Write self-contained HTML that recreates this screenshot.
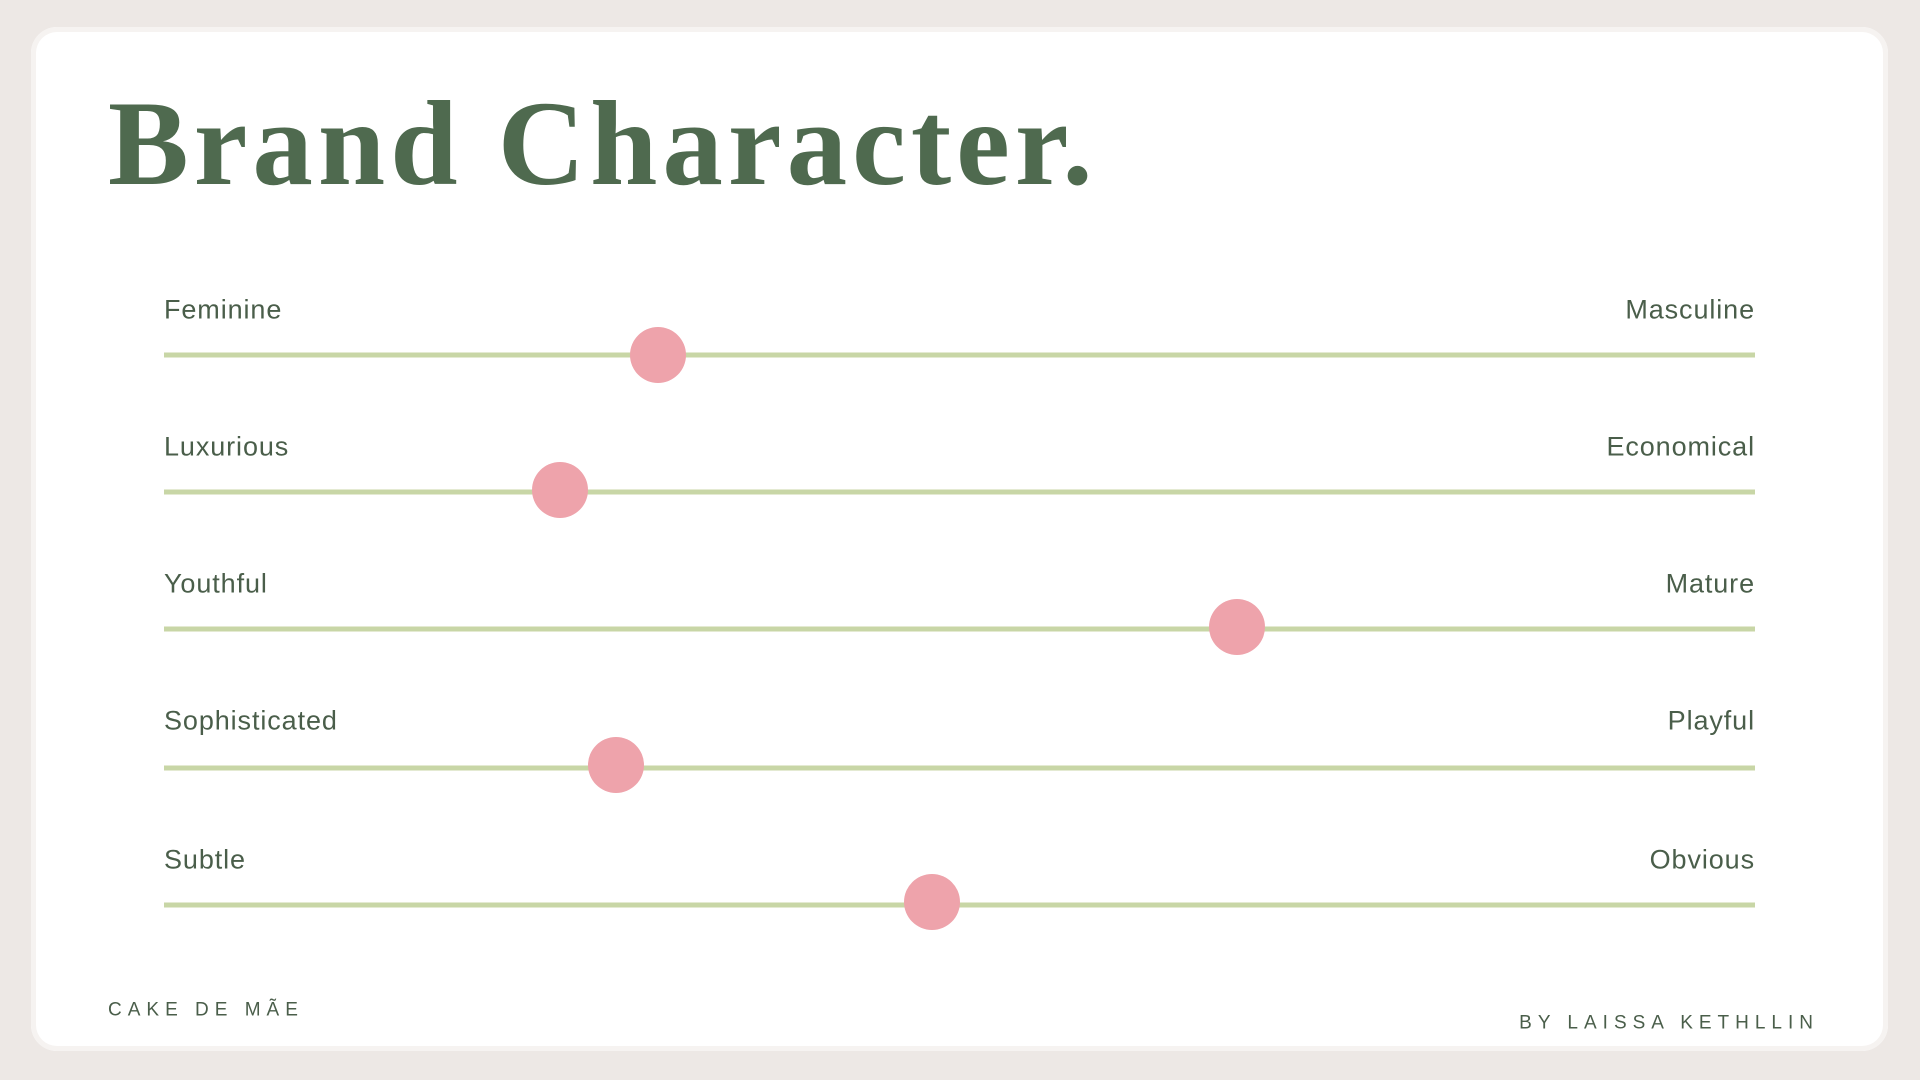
<!DOCTYPE html>
<html><head><meta charset="utf-8"><style>
html,body{margin:0;padding:0;}
body{width:1920px;height:1080px;background:#ede8e5;position:relative;overflow:hidden;font-family:"Liberation Sans",sans-serif;}
.card{position:absolute;left:31px;top:27px;width:1857px;height:1024px;background:#fff;border-radius:26px;box-shadow:inset 0 0 0 5px #f6f3f1;}
.title{position:absolute;left:108px;top:84px;font-family:"Liberation Serif",serif;font-weight:bold;font-size:121px;line-height:1;color:#4f6a4f;letter-spacing:5px;white-space:nowrap;}
.lbl{position:absolute;font-size:27px;color:#4a5e4a;line-height:1;letter-spacing:0.9px;transform:translateY(-50%);}
.l{left:164px}.r{right:165px}
.line{position:absolute;left:164px;width:1591px;height:5px;background:#c8d6a6;transform:translateY(-50%);}
.knob{position:absolute;width:56px;height:56px;border-radius:50%;background:#eea3ab;transform:translate(-50%,-50%);}
.foot{position:absolute;font-size:19px;color:#4a5e4a;letter-spacing:6px;line-height:1;transform:translateY(-50%);}
</style></head><body>
<div class="card"></div>
<div class="title">Brand Character.</div>

<div class="lbl l" style="top:310px">Feminine</div><div class="lbl r" style="top:310px">Masculine</div>
<div class="line" style="top:355px"></div><div class="knob" style="left:658px;top:355px"></div>

<div class="lbl l" style="top:447px">Luxurious</div><div class="lbl r" style="top:447px">Economical</div>
<div class="line" style="top:492px"></div><div class="knob" style="left:560px;top:490px"></div>

<div class="lbl l" style="top:584px">Youthful</div><div class="lbl r" style="top:584px">Mature</div>
<div class="line" style="top:629px"></div><div class="knob" style="left:1237px;top:627px"></div>

<div class="lbl l" style="top:721px">Sophisticated</div><div class="lbl r" style="top:721px">Playful</div>
<div class="line" style="top:768px"></div><div class="knob" style="left:616px;top:765px"></div>

<div class="lbl l" style="top:860px">Subtle</div><div class="lbl r" style="top:860px">Obvious</div>
<div class="line" style="top:905px"></div><div class="knob" style="left:932px;top:902px"></div>

<div class="foot" style="left:108px;top:1010px">CAKE DE MÃE</div>
<div class="foot" style="right:101px;top:1023px">BY LAISSA KETHLLIN</div>
</body></html>
